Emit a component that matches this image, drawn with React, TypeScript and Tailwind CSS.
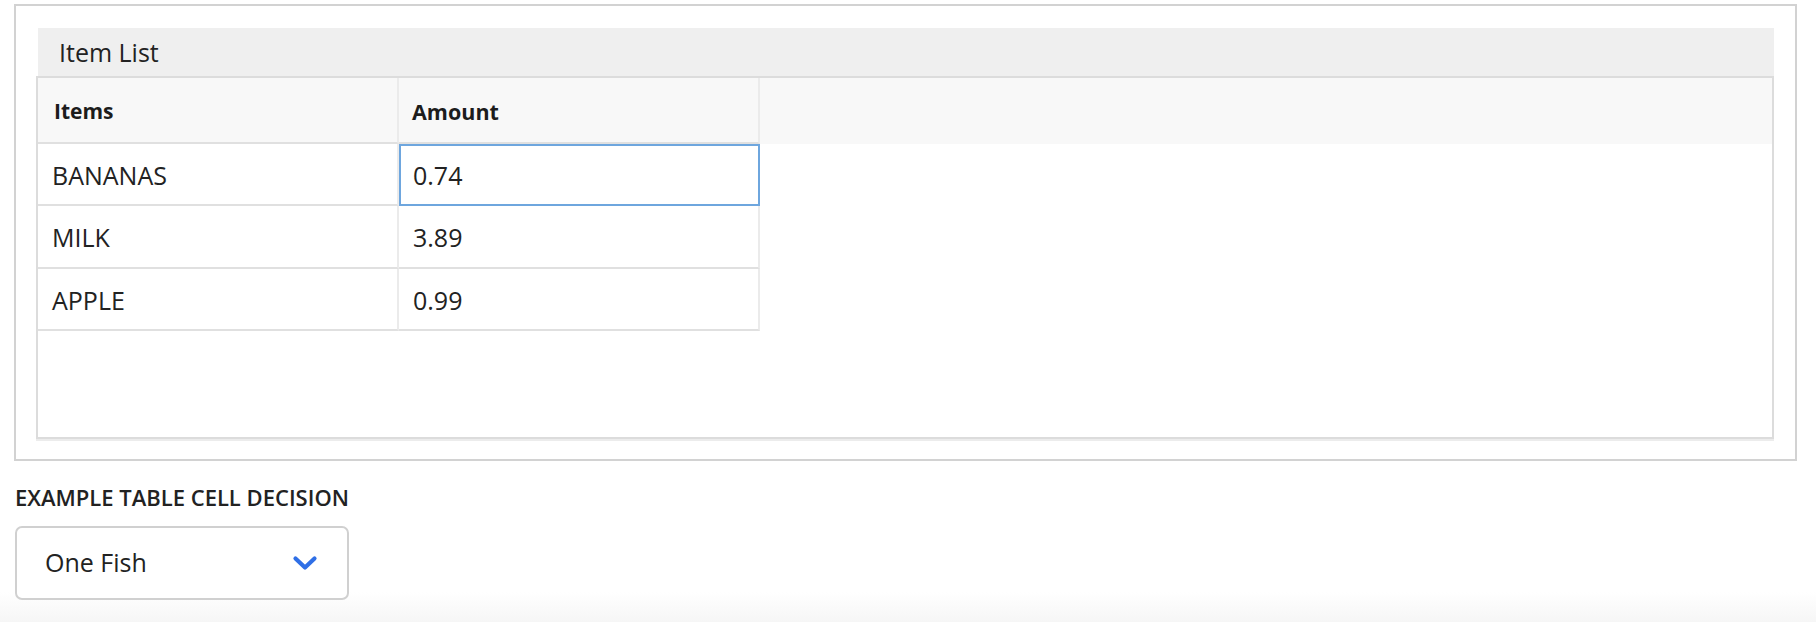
import React from "react";

const rows = [
  { item: "BANANAS", amount: "0.74", selected: true, h: "h-[62px]" },
  { item: "MILK", amount: "3.89", selected: false, h: "h-[63px]" },
  { item: "APPLE", amount: "0.99", selected: false, h: "h-[62px]" },
];

export default function App() {
  return (
    <div
      className="min-h-[622px] w-full overflow-hidden bg-[linear-gradient(to_bottom,#ffffff_0px,#ffffff_592px,#f6f6f6_622px)] text-[#222222]"
      style={{ fontFamily: '"Open Sans", "Noto Sans", sans-serif' }}
    >
      <div className="pt-[4px] pl-[14px]">
        <div className="w-[1783px] border-2 border-[#d2d2d2] pt-[22px] pl-[22px] pr-[21px] pb-[20px]">
          <div className="flex h-[48px] items-center bg-[#efefef] text-[25px] leading-none text-[#222]">
            <span className="ml-[21px]">Item List</span>
          </div>
          <div className="-ml-[2px] h-[363px] border-2 border-[#dcdcdc] bg-white shadow-[0_2px_0_#ececec]">
            <div className="flex h-[66px] bg-[#f8f8f8]">
              <div className="flex w-[361px] items-center border-r-2 border-b-2 border-r-[#ebebeb] border-b-[#e0e0e0] pl-[16px] pt-[4px] text-[21px] font-bold text-[#1c1c1c]">
                Items
              </div>
              <div className="flex w-[361px] items-center border-r-2 border-b-2 border-r-[#ebebeb] border-b-[#e0e0e0] pl-[13px] pt-[4px] text-[21.5px] font-bold text-[#1c1c1c]">
                Amount
              </div>
            </div>
            {rows.map((r) => (
              <div key={r.item} className={`flex ${r.h}`}>
                <div className="flex w-[361px] items-center border-r-2 border-b-2 border-r-[#ebebeb] border-b-[#e0e0e0] pl-[14px] pt-[3px] text-[25px]">
                  {r.item}
                </div>
                {r.selected ? (
                  <div className="flex w-[361px] items-center border-2 border-[#6ea6de] pl-[12px] pt-[2px] text-[25px]">
                    {r.amount}
                  </div>
                ) : (
                  <div className="flex w-[361px] items-center border-r-2 border-b-2 border-r-[#ebebeb] border-b-[#e0e0e0] pl-[14px] pt-[3px] text-[25px]">
                    {r.amount}
                  </div>
                )}
              </div>
            ))}
          </div>
        </div>
      </div>
      <div className="pl-[15px] pt-[22px]">
        <div className="text-[22px] font-semibold leading-[28px] text-[#222]">
          EXAMPLE TABLE CELL DECISION
        </div>
        <div className="mt-[15px] flex h-[74px] w-[334px] items-center justify-between rounded-[7px] border-2 border-[#d0d0d0] bg-white pl-[28px] pr-[29px]">
          <span className="text-[25px] text-[#222]">One Fish</span>
          <svg width="26" height="16" viewBox="0 0 26 16" fill="none">
            <path
              d="M3.5 3.5 L13 12.5 L22.5 3.5"
              stroke="#2f6fe6"
              strokeWidth="4.2"
              strokeLinecap="round"
              strokeLinejoin="round"
            />
          </svg>
        </div>
      </div>
    </div>
  );
}
